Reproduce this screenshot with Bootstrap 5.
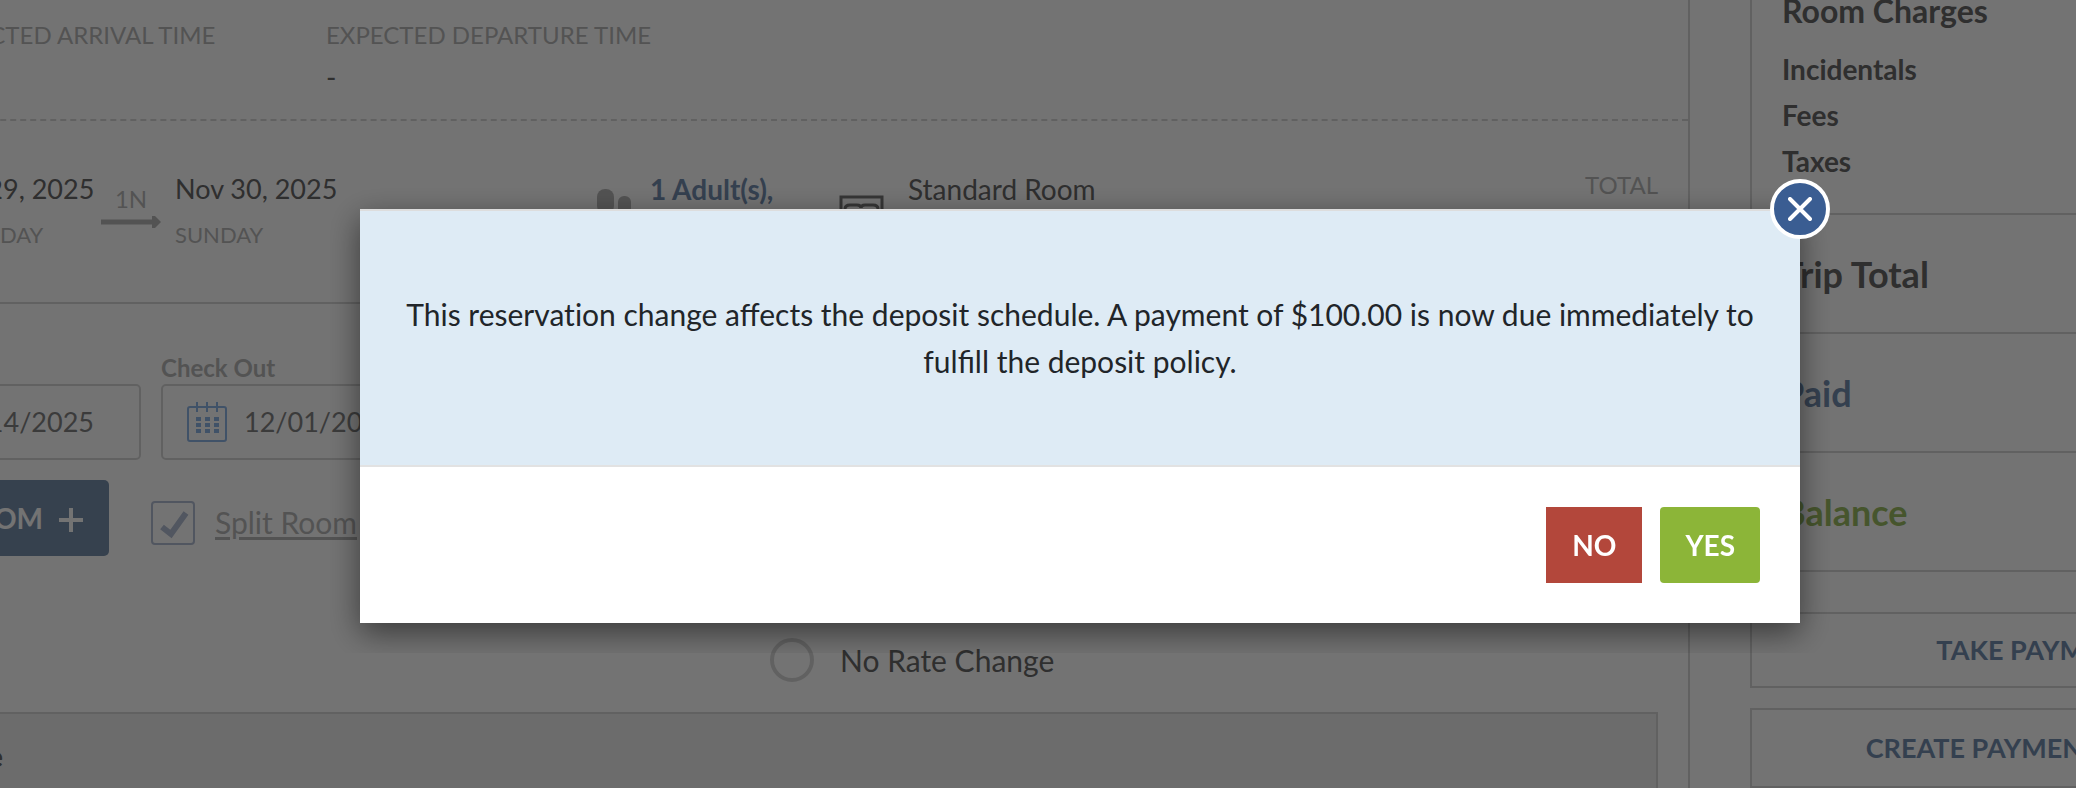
<!DOCTYPE html>
<html lang="en">
<head>
<meta charset="utf-8">
<meta name="viewport" content="width=device-width, initial-scale=1">
<title>Reservation</title>
<link href="https://cdn.jsdelivr.net/npm/bootstrap@5.3.0/dist/css/bootstrap.min.css" rel="stylesheet">
<style>
  :root { --line: #d8d8d8; --muted: #b8b8b8; --ink: #686868; --blue: #748eb0; --green: #9cbd64; }
  html, body { height: 100%; overflow: hidden; }
  body { font-family: Lato, "Liberation Sans", sans-serif; font-size: 28px; line-height: 40px; color: var(--ink); background: #fff; }

  .app-shell { margin: 0 -242px 0 -200px; gap: 60px; height: 100%; }
  .booking { border-right: 2px solid var(--line); min-width: 0; }
  .times { display: grid; grid-template-columns: 394px 1fr; padding: 19px 0 22px 132px; border-bottom: 2px dashed var(--line); }
  .time-value { padding-top: 6px; }
  .caption { font-size: 24px; line-height: 32px; color: var(--muted); }
  .stay { padding: 48px 30px 51px 132px; border-bottom: 2px solid var(--line); }
  .day-name { font-size: 22px; line-height: 32px; color: var(--muted); margin-top: 10px; }
  .nights { width: 60px; margin: 14px 14px 0 7px; }
  .when { width: 162px; font-size: 27px; }
  .guests { margin-left: 260px; width: 179px; gap: 19px; }
  .guests a { font-weight: 700; color: var(--blue); text-decoration: none; }
  .room-type { margin-left: 63px; gap: 24px; }
  .guests svg, .room-type svg { margin-top: 20px; flex: none; }

  .change-form { padding: 48px 30px 0 74px; }
  .field-label { display: block; font-size: 24px; line-height: 32px; font-weight: 700; color: var(--muted); margin: 0; }
  .field-row { gap: 20px; margin-bottom: 20px; }
  .date-field { width: 267px; }
  .date-box { height: 76px; border: 2px solid var(--line); border-radius: 5px; padding: 0 10px 0 24px; gap: 17px; }
  .date-box input { border: 0; padding: 0; width: 100%; min-width: 0; font-size: 27px; color: #848484; background: transparent; outline: 0; }
  .arrive-box { padding: 0 45px 0 10px; gap: 10px; }
  .arrive-box input { text-align: right; }
  .btn-room { width: 235px; height: 76px; border: 0; border-radius: 5px; background: #7890ae; color: #fff; font-size: 28px; font-weight: 700; gap: 16px; padding: 0 26px 0 10px; }
  .tick { appearance: none; width: 44px; height: 44px; margin: 10px 20px 0 42px; border: 2px solid #b4bfd4; border-radius: 4px; background: url("data:image/svg+xml,%3Csvg xmlns='http://www.w3.org/2000/svg' viewBox='0 0 40 40'%3E%3Cpath d='M9 24l9 7L33 10' fill='none' stroke='%23b4bfd4' stroke-width='6'/%3E%3C/svg%3E") center/100% no-repeat; }
  .split-label { font-size: 30px; color: var(--muted); text-decoration: underline; text-decoration-thickness: 3px; text-underline-offset: 3px; }
  .rate-choice { margin: 82px 0 30px 896px; gap: 26px; font-size: 30px; }
  .rate-choice input { appearance: none; width: 44px; height: 44px; margin: 0; border: 4px solid var(--line); border-radius: 50%; }
  .rate-panel { border: 2px solid var(--line); background: #f0f0f0; height: 120px; padding: 22px 70px; font-weight: 700; }

  .folio { width: 568px; flex: none; margin-top: -9px; font-weight: 700; }
  .totals { border-left: 2px solid var(--line); margin-bottom: 40px; }
  .totals > div { border-bottom: 2px solid var(--line); padding-left: 30px; }
  .charges { padding-bottom: 29px; line-height: 46px; }
  .charges h2 { font-size: 32px; line-height: 40px; font-weight: 700; margin: 0 0 15px; }
  .sum-row { height: 119px; font-size: 36px; }
  .sum-paid { color: var(--blue); }
  .sum-balance { color: var(--green); }
  .btn-folio { display: block; width: 100%; height: 76px; margin-bottom: 20px; padding: 0 0 0 6px; border: 2px solid var(--line); border-radius: 0; background: #fff; color: var(--blue); font-size: 27px; font-weight: 700; }
  .btn-folio:last-child { height: 80px; padding: 0 36px 0 0; }

  .shade { background: rgba(0, 0, 0, .55); z-index: 1040; }
  .modal { overflow: hidden; padding: 149px 0 0 84px; }
  .notice { max-width: 1500px; margin: 0 auto; padding: 60px 30px 30px; overflow: hidden; }
  .notice .modal-content { border: 0; border-top: 2px solid #ddd; border-radius: 0; box-shadow: 0 10px 30px rgba(0, 0, 0, .5); }
  .notice .modal-body { background: #deebf5; color: #212529; text-align: center; font-size: 30px; line-height: 47px; padding: 80px 40px; }
  .plain-word { font-variant-ligatures: none; }
  .notice .modal-footer { border-top: 2px solid #e2e2e2; border-radius: 0; padding: 40px; gap: 18px; }
  .notice .modal-footer > * { margin: 0; }
  .btn-answer { height: 76px; padding: 0 26px; border: 0; color: #fff; font-size: 28px; line-height: 76px; font-weight: 700; }
  .btn-no { background: #b3473b; border-radius: 0; }
  .btn-yes { background: #8cb538; border-radius: 4px; padding: 0 25px; }
  .btn-shut { position: absolute; z-index: 2; top: -32px; right: -30px; width: 60px; height: 60px; padding: 0; border: 4px solid #fff; border-radius: 50%; background: #3a5d92; }
</style>
</head>
<body>
<div class="app-shell d-flex">
  <main class="booking flex-grow-1">
    <section class="times">
      <div><div class="caption">EXPECTED ARRIVAL TIME</div></div>
      <div><div class="caption">EXPECTED DEPARTURE TIME</div><div class="time-value">-</div></div>
    </section>

    <section class="stay d-flex align-items-start">
      <div class="when text-nowrap">Nov 29, 2025<div class="day-name">SATURDAY</div></div>
      <div class="nights text-center">
        <div class="caption">1N</div>
        <svg class="d-block" width="60" height="14" viewBox="0 0 60 14"><path d="M0 7h54" stroke="#b8b8b8" stroke-width="5"/><path d="M51 1l3 0 6 6-6 6h-3z" fill="#b8b8b8"/></svg>
      </div>
      <div class="when text-nowrap">Nov 30, 2025<div class="day-name">SUNDAY</div></div>
      <div class="guests d-flex text-nowrap">
        <svg width="34" height="40" viewBox="0 0 34 40" fill="#b8b8b8"><rect width="17" height="25" rx="8"/><rect x="21" y="7" width="13" height="20" rx="6"/><path d="M0 27h18v13H0zM21 29h13v11H21z"/></svg>
        <a href="#">1 Adult(s),</a>
      </div>
      <div class="room-type d-flex text-nowrap">
        <svg width="45" height="40" viewBox="0 0 45 40" fill="none" stroke="#787878" stroke-width="3"><path d="M2 40V8h41v32M6 24v-4q0-4 5-4h7q4 0 4 3q0-3 4-3h8q5 0 5 4v4"/></svg>
        <span>Standard Room</span>
      </div>
      <div class="caption ms-auto">TOTAL</div>
    </section>

    <form class="change-form">
      <div class="field-row d-flex">
        <div class="date-field">
          <label class="field-label" for="in">Check In</label>
          <div class="date-box arrive-box d-flex align-items-center">
            <svg width="40" height="40" viewBox="0 0 40 40" class="flex-shrink-0"><use href="#cal"/></svg>
            <input id="in" type="text" value="11/14/2025">
          </div>
        </div>
        <div class="date-field">
          <label class="field-label" for="out">Check Out</label>
          <div class="date-box d-flex align-items-center">
            <svg width="40" height="40" viewBox="0 0 40 40" class="flex-shrink-0"><g id="cal" fill="none" stroke="#8fb6e6" stroke-width="2"><rect x="1" y="5" width="38" height="34" rx="2"/><path d="M10 0v10M20 0v10M30 0v10"/><path d="M9 17h23M9 23h23M9 29h23" stroke-width="4" stroke-dasharray="5 4"/></g></svg>
            <input id="out" type="text" value="12/01/2025">
          </div>
        </div>
      </div>
      <div class="d-flex align-items-center">
        <button type="button" class="btn btn-room d-flex align-items-center justify-content-end text-nowrap">ADD ROOM
          <svg width="24" height="24" viewBox="0 0 24 24" stroke="#fff" stroke-width="4" class="mt-1 flex-shrink-0"><path d="M0 12h24M12 0v24"/></svg></button>
        <input class="tick" type="checkbox" id="split" checked>
        <label class="split-label mt-2" for="split">Split Room</label>
      </div>
      <div class="rate-choice d-flex align-items-center">
        <input type="radio" id="norate" name="rate"><label for="norate">No Rate Change</label>
      </div>
      <div class="rate-panel">Rate</div>
    </form>
  </main>

  <aside class="folio">
    <div class="totals">
      <div class="charges"><h2>Room Charges</h2><div>Incidentals</div><div>Fees</div><div>Taxes</div></div>
      <div class="sum-row d-flex align-items-center">Trip Total</div>
      <div class="sum-row sum-paid d-flex align-items-center">Paid</div>
      <div class="sum-row sum-balance d-flex align-items-center">Balance</div>
    </div>
    <button type="button" class="btn btn-folio">TAKE PAYMENT</button>
    <button type="button" class="btn btn-folio">CREATE PAYMENT LINK</button>
  </aside>
</div>

<div class="shade position-fixed top-0 start-0 w-100 h-100"></div>

<div class="modal d-block" tabindex="-1" role="dialog" aria-modal="true" aria-labelledby="msg">
  <div class="modal-dialog notice">
    <div class="modal-content">
      <button type="button" class="btn btn-shut d-flex align-items-center justify-content-center" aria-label="Close">
        <svg width="24" height="24" viewBox="0 0 24 24" stroke="#fff" stroke-width="4" stroke-linecap="round"><path d="M2 2l20 20M22 2L2 22"/></svg>
      </button>
      <div class="modal-body" id="msg">This <span class="plain-word">reservation</span> change affects the deposit schedule. A payment of $100.00 is now due immediately to fulfill the deposit policy.</div>
      <div class="modal-footer">
        <button type="button" class="btn btn-answer btn-no">NO</button>
        <button type="button" class="btn btn-answer btn-yes">YES</button>
      </div>
    </div>
  </div>
</div>
<script src="https://cdn.jsdelivr.net/npm/bootstrap@5.3.0/dist/js/bootstrap.bundle.min.js"></script>
</body>
</html>
